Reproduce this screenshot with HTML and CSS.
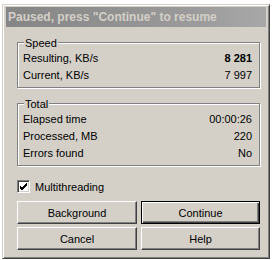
FILE: index.html
```html
<!DOCTYPE html>
<html>
<head>
<meta charset="utf-8">
<link rel="stylesheet" href="styles.css">
</head>
<body>
<div class="window">
  <div class="titlebar">Paused, press "Continue" to resume</div>
  <div class="content">
    <div class="group">
      <div class="legend">Speed</div>
      <div class="row"><span>Resulting, KB/s</span><span class="bold">8 281</span></div>
      <div class="row"><span>Current, KB/s</span><span>7 997</span></div>
    </div>
    <div class="group total">
      <div class="legend">Total</div>
      <div class="row"><span>Elapsed time</span><span>00:00:26</span></div>
      <div class="row"><span>Processed, MB</span><span>220</span></div>
      <div class="row"><span>Errors found</span><span>No</span></div>
    </div>
    <div class="check">
      <span class="box"><svg width="11" height="11" viewBox="0 0 11 11"><path d="M2 5 L4 7 L9 2 M2 6 L4 8 L9 3 M2 4 L4 6 L9 1" stroke="#000" stroke-width="1" fill="none" transform="translate(0,1)"/></svg></span>
      <span>Multithreading</span>
    </div>
    <div class="buttons">
      <div class="btn">Background</div>
      <div class="btn default">Continue</div>
      <div class="btn">Cancel</div>
      <div class="btn">Help</div>
    </div>
  </div>
</div>
</body>
</html>
```
FILE: styles.css
```css
html, body {
  margin: 0;
  padding: 0;
  background: #ffffff;
}
body {
  font-family: "Liberation Sans", Arial, sans-serif;
  font-size: 11px;
  color: #000;
}
.window {
  margin: 4px 0 0 2px;
  width: 268px;
  height: 255px;
  box-sizing: border-box;
  background: #d4d0c8;
  border: 1px solid;
  border-color: #d4d0c8 #404040 #404040 #d4d0c8;
  box-shadow: inset 1px 1px 0 #ffffff, inset -1px -1px 0 #808080;
  padding: 2px 3px 3px 3px;
  display: flex;
  flex-direction: column;
}
.titlebar {
  height: 20px;
  line-height: 20px;
  padding-left: 2px;
  background: linear-gradient(90deg, #858585 0%, #9a9a9a 70%, #a8a8a8 100%);
  color: #d4d0c8;
  font-weight: bold;
  font-size: 12px;
  white-space: nowrap;
}
.content {
  padding: 15px 6px 0 11px;
  display: flex;
  flex-direction: column;
}
.group {
  border: 1px solid #808080;
  box-shadow: inset 1px 1px 0 #ffffff, 1px 1px 0 #ffffff;
  padding: 0 7px 3px 5px;
  display: flex;
  flex-direction: column;
}
.total {
  margin-top: 15px;
}
.legend {
  align-self: flex-start;
  margin: -7px 0 0 1px;
  padding: 0 1px;
  line-height: 14px;
  background: #d4d0c8;
}
.row {
  display: flex;
  justify-content: space-between;
  line-height: 17px;
  height: 17px;
}
.bold {
  font-weight: bold;
}
.check {
  margin-top: 14px;
  display: flex;
  align-items: center;
  gap: 5px;
  height: 13px;
}
.box {
  width: 13px;
  height: 13px;
  box-sizing: border-box;
  background: #fff;
  border: 1px solid;
  border-color: #808080 #ffffff #ffffff #808080;
  box-shadow: inset 1px 1px 0 #404040, inset -1px -1px 0 #d4d0c8;
  display: flex;
  align-items: center;
  justify-content: center;
}
.box svg {
  display: block;
}
.buttons {
  margin-top: 8px;
  display: grid;
  grid-template-columns: 120px 119px;
  grid-auto-rows: 23px;
  column-gap: 4px;
  row-gap: 3px;
}
.btn {
  box-sizing: border-box;
  border: 1px solid;
  border-color: #ffffff #404040 #404040 #ffffff;
  box-shadow: inset -1px -1px 0 #808080;
  display: flex;
  align-items: center;
  justify-content: center;
}
.btn.default {
  border: 1px solid #000;
  box-shadow: inset 1px 1px 0 #ffffff, inset -1px -1px 0 #404040, inset -2px -2px 0 #808080;
}
```
